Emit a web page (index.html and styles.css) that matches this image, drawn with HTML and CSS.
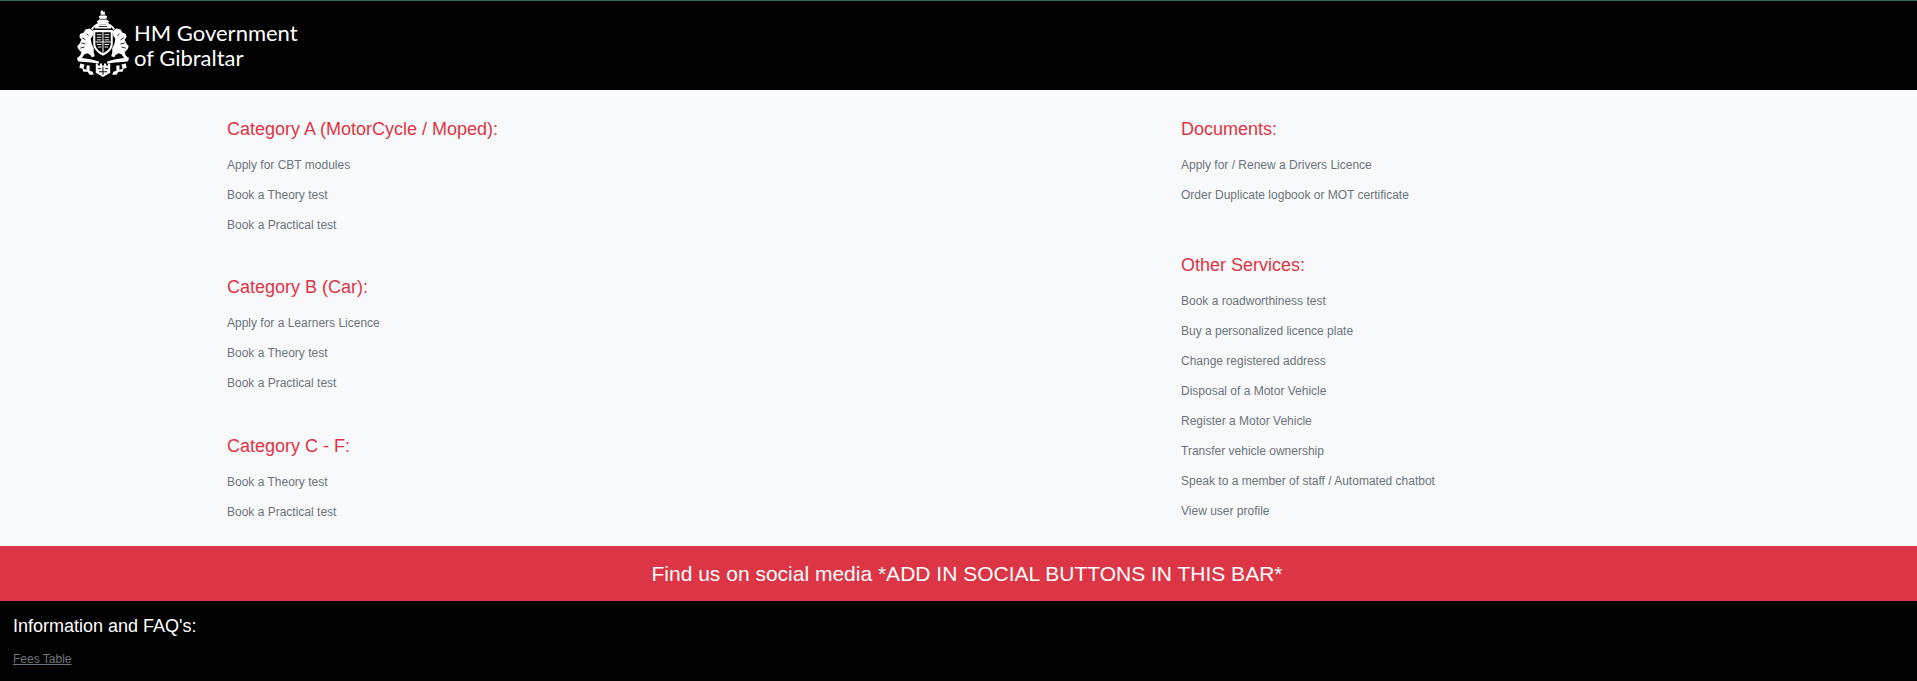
FILE: index.html
```html
<!DOCTYPE html>
<html lang="en">
<head>
<meta charset="utf-8">
<title>HM Government of Gibraltar</title>
<link rel="stylesheet" href="styles.css">
</head>
<body>
<header class="topbar">
  <div class="logo">
    <svg class="crest" width="54" height="70" viewBox="0 0 52 68" aria-hidden="true">
      <defs>
        <g id="half">
          <!-- lion -->
          <path d="M13 18l-4 1-2 3-3 1-1 3 2 3-2 4-2 2 1 3 3 3-1 3-2 2 1 2 3-2 2-3 3-1 3 2 1 2 3-1-1-4 0-4-2-4-1-5 2-3 1-4z" fill="#fff"/>
          <path d="M6 27l3 2M5 32l4 1M4 37l4-1M10 23l2 2" stroke="#000" stroke-width=".8" fill="none"/>
          <!-- mantling arc -->
          <path d="M15 19c2-3 5-5 8-6" stroke="#fff" stroke-width="1.600" fill="none"/>
          <!-- ribbon scroll and lower foliage -->
          <path d="M1 46l14 2 7 2v2l-8-1-12-1-1-2z" fill="#fff"/>
          <path d="M4 52l4 1-1 4 3 1 0-4 3 0 0 5 3 1 1 3-4 0-2-3-4 0-1-3-3-1z" fill="#fff"/>
        </g>
      </defs>
      <!-- crown and crest -->
      <path d="M25 0l1.500 2 1-1 .5 4 2 1-1 3 3 2-2 3h-8l-2-3 3-2-1-3 2-1-.5-3z" fill="#fff"/>
      <path d="M24 5h4M23 9h6" stroke="#000" stroke-width=".7" fill="none"/>
      <use href="#half"/>
      <use href="#half" transform="matrix(-1 0 0 1 52 0)"/>
      <!-- helm above shield -->
      <path d="M19 14h14l1 4H18z" fill="#fff"/>
      <path d="M22 16h8" stroke="#000" stroke-width=".8"/>
      <!-- shield -->
      <path d="M16.500 19.500h19v13c0 6-5 9.500-9.500 12-4.500-2.500-9.500-6-9.500-12z" fill="#fff"/>
      <path d="M18.500 21.500h15v11c0 5-4 7.500-7.500 9.500-3.500-2-7.500-4.500-7.500-9.500z" fill="#000"/>
      <path d="M26 21.500v20M18.500 31h15" stroke="#fff" stroke-width="1"/>
      <path d="M20 24h4.500M20 26.500h4.500M20 29h4.500M27.500 24h4.500M27.500 26.500h4.500M27.500 29h4.500M20 33.500h4.500M21 36h3.500M27.500 33.500h4.500M27.500 36h3.500" stroke="#fff" stroke-width=".9"/>
      <!-- castle -->
      <path d="M19 52h2v2h2v-2h2v2h2v-2h2v2h2v-2h2v9l-7 4-7-4z" fill="#fff"/>
      <path d="M21 57h3M28 57h3M26 55v8M22 60h8" stroke="#000" stroke-width=".9"/>
    </svg>
    <span class="logo-text">HM Government<br>of Gibraltar</span>
  </div>
</header>
<main class="services">
  <div class="col">
    <section class="group">
      <h2>Category A (MotorCycle / Moped):</h2>
      <ul>
        <li><a href="#">Apply for CBT modules</a></li>
        <li><a href="#">Book a Theory test</a></li>
        <li><a href="#">Book a Practical test</a></li>
      </ul>
    </section>
    <section class="group group-b">
      <h2>Category B (Car):</h2>
      <ul>
        <li><a href="#">Apply for a Learners Licence</a></li>
        <li><a href="#">Book a Theory test</a></li>
        <li><a href="#">Book a Practical test</a></li>
      </ul>
    </section>
    <section class="group">
      <h2>Category C - F:</h2>
      <ul>
        <li><a href="#">Book a Theory test</a></li>
        <li><a href="#">Book a Practical test</a></li>
      </ul>
    </section>
  </div>
  <div class="col">
    <section class="group group-wide">
      <h2>Documents:</h2>
      <ul>
        <li><a href="#">Apply for / Renew a Drivers Licence</a></li>
        <li><a href="#">Order Duplicate logbook or MOT certificate</a></li>
      </ul>
    </section>
    <section class="group">
      <h2>Other Services:</h2>
      <ul>
        <li><a href="#">Book a roadworthiness test</a></li>
        <li><a href="#">Buy a personalized licence plate</a></li>
        <li><a href="#">Change registered address</a></li>
        <li><a href="#">Disposal of a Motor Vehicle</a></li>
        <li><a href="#">Register a Motor Vehicle</a></li>
        <li><a href="#">Transfer vehicle ownership</a></li>
        <li><a href="#">Speak to a member of staff / Automated chatbot</a></li>
        <li><a href="#">View user profile</a></li>
      </ul>
    </section>
  </div>
</main>
<div class="social">Find us on social media *ADD IN SOCIAL BUTTONS IN THIS BAR*</div>
<footer class="info">
  <h3>Information and FAQ's:</h3>
  <a href="#">Fees Table</a>
</footer>
</body>
</html>
```
FILE: styles.css
```css
* { box-sizing: border-box; }
html, body { margin: 0; padding: 0; }
body {
  height: 681px;
  overflow: hidden;
  display: flex;
  flex-direction: column;
  background: #f8f9fa;
  font-family: "Liberation Sans", Arial, sans-serif;
  color: #6c757d;
}
.topbar {
  height: 90px;
  background: #000;
  border-top: 1px solid #2d6a4f;
  padding: 9px 0 0 76px;
}
.logo { display: flex; align-items: center; gap: 4px; height: 70px; }
.crest { flex: none; filter: blur(.3px); }
.logo-text {
  color: #fff;
  font-family: "Lato", sans-serif;
  font-size: 22px;
  line-height: 25px;
}
.services {
  height: 456px;
  display: flex;
  padding: 28px 0 0 227px;
}
.col { display: flex; flex-direction: column; }
.col:first-child { width: 954px; }
.group { margin-bottom: 36px; }
.group-b { margin-bottom: 37px; }
.group-wide { margin-bottom: 44px; }
.group h2 {
  margin: 0 0 10px;
  color: #dc3545;
  font-size: 18px;
  font-weight: 400;
  line-height: 22px;
}
.group ul { list-style: none; margin: 0; padding: 0; }
.group li { height: 30px; font-size: 12px; line-height: 30px; }
.group a { color: #6c757d; text-decoration: none; }
.social {
  height: 55px;
  padding-left: 17px;
  background: #dc3545;
  color: #fff;
  font-size: 21px;
  line-height: 55px;
  text-align: center;
}
.info { flex: 1; background: #000; padding: 15px 13px 0; }
.info h3 {
  margin: 0 0 12px;
  color: #fff;
  font-size: 18px;
  font-weight: 400;
  line-height: 21px;
}
.info a { color: #6c757d; font-size: 12px; text-decoration: underline; }
```
